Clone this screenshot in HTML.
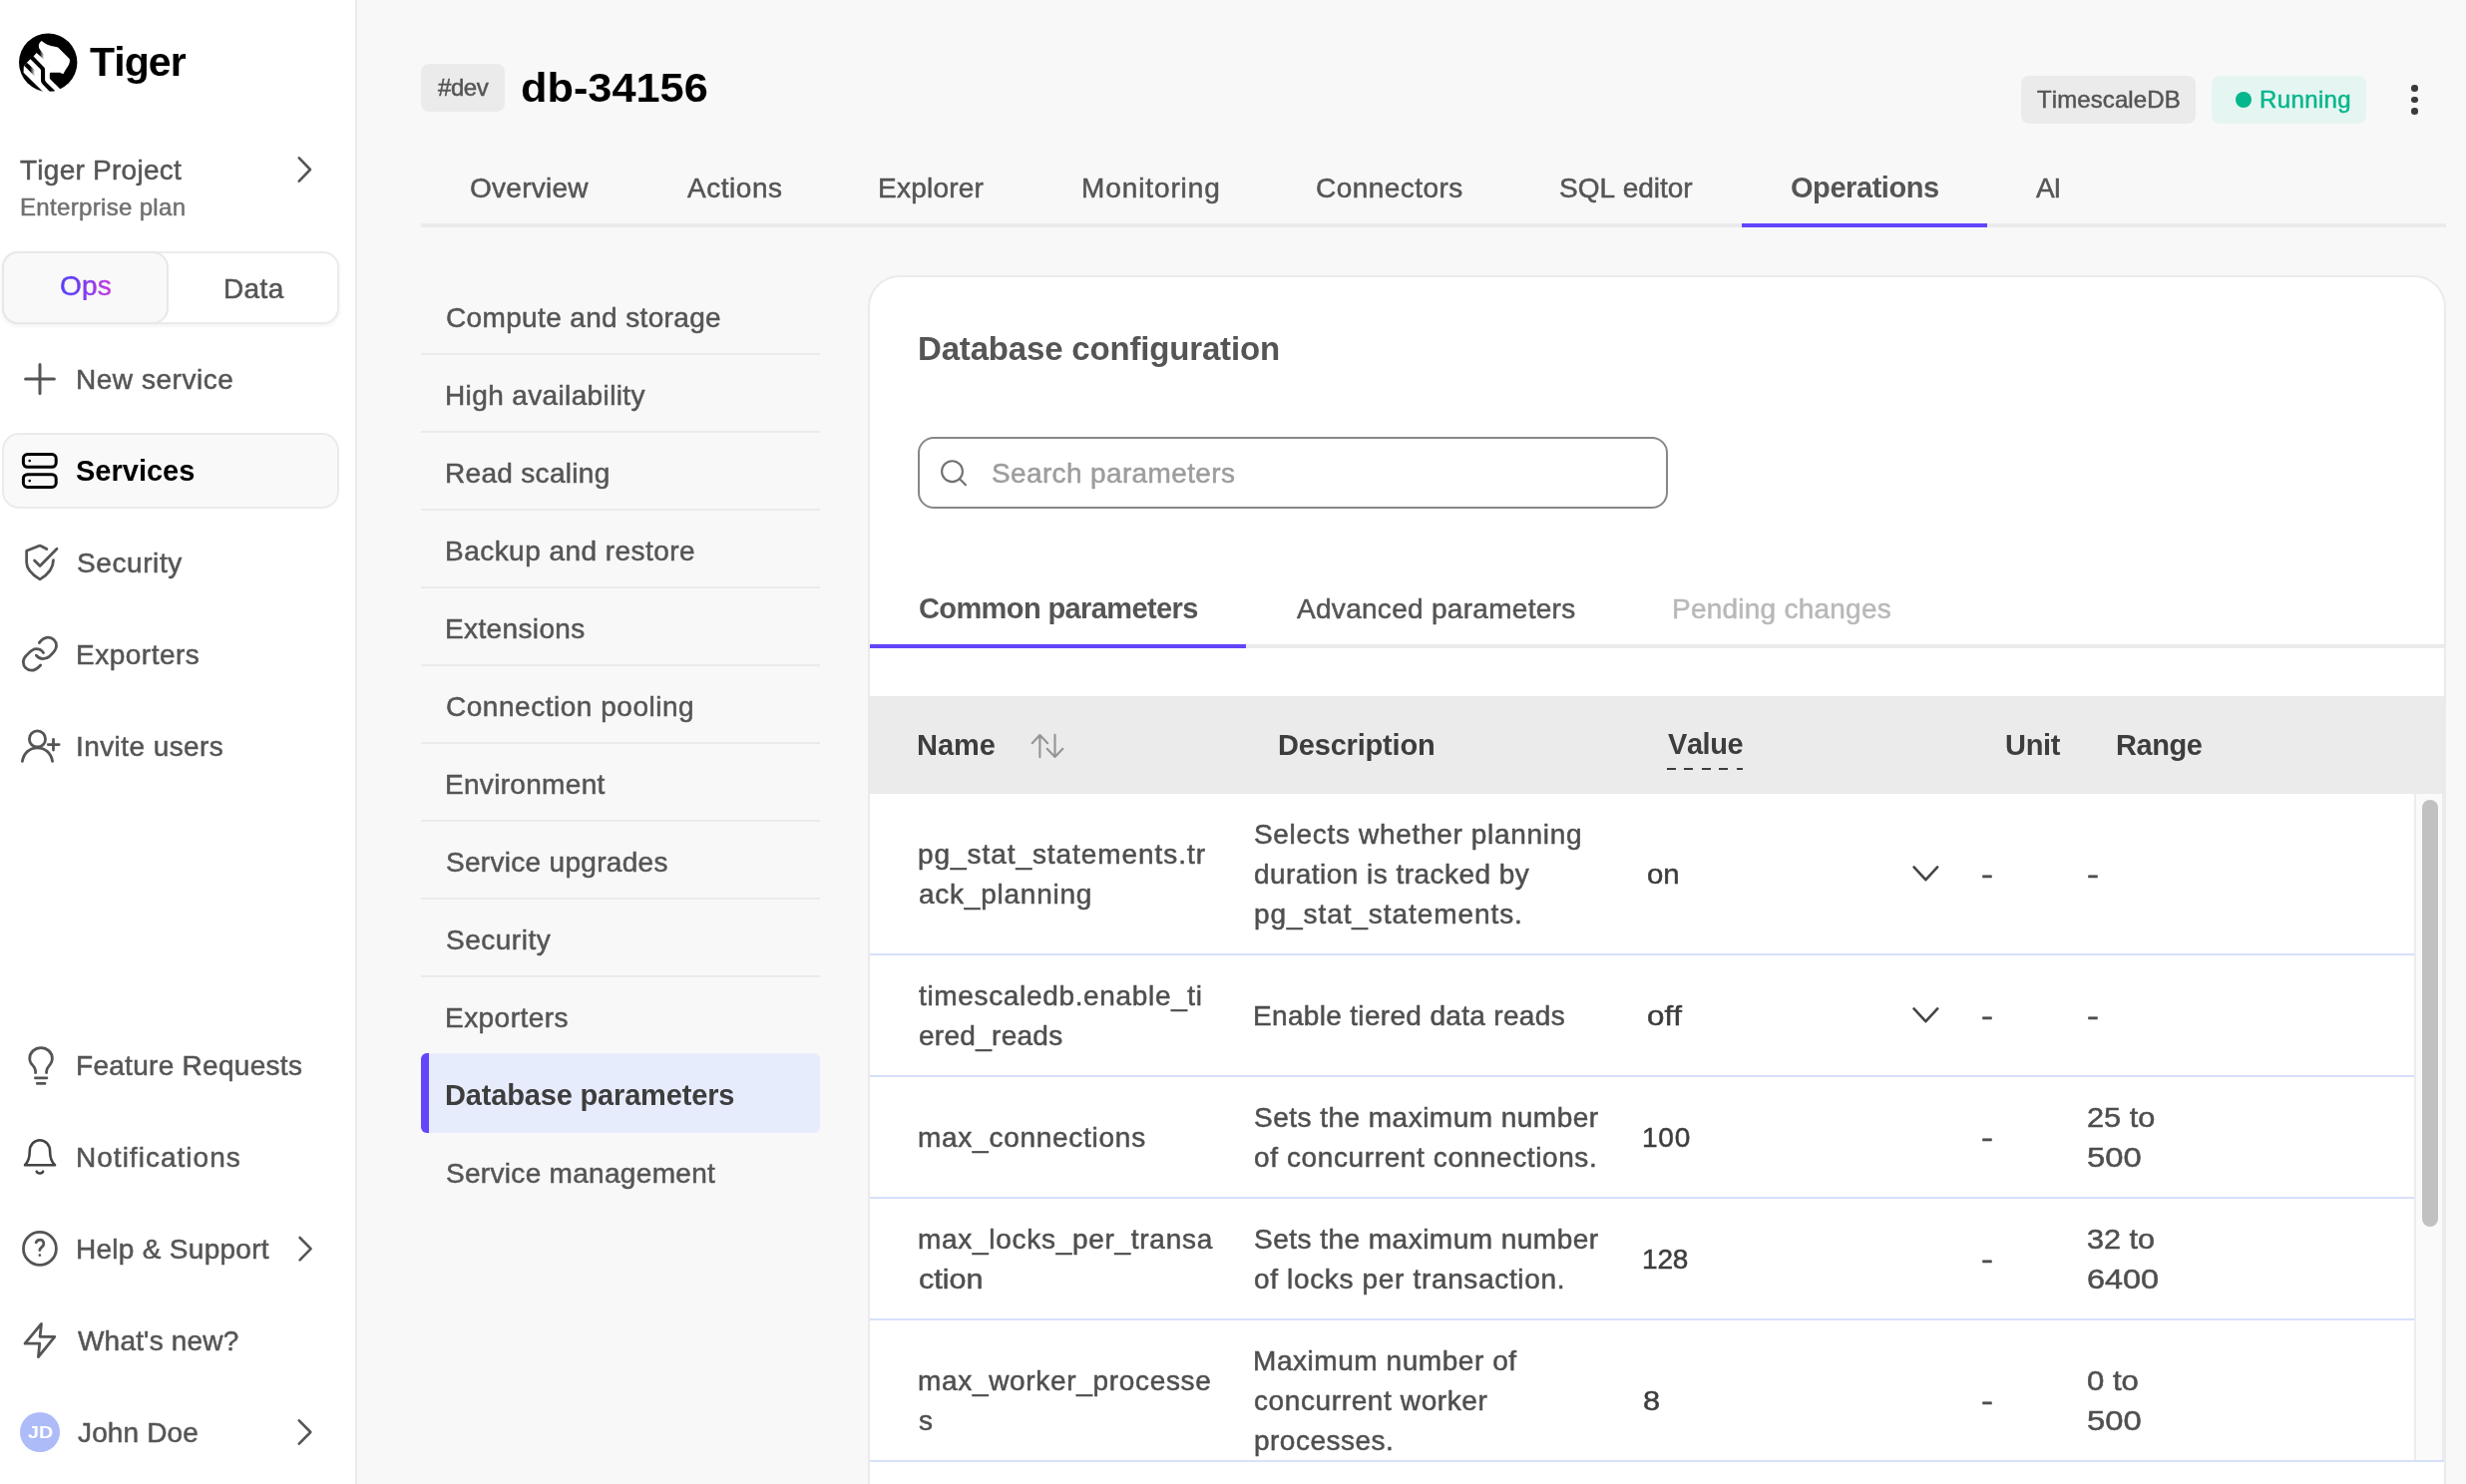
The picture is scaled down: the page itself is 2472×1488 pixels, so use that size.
<!DOCTYPE html>
<html lang="en"><head><meta charset="utf-8"><title>db-34156 – Database parameters</title>
<style>
html,body{margin:0;padding:0;overflow:hidden}
body{width:2472px;height:1488px;overflow:hidden;position:relative;background:#f8f8f8;font-family:"Liberation Sans", sans-serif;color:#555;font-kerning:none;-webkit-font-smoothing:antialiased}
#w{position:absolute;left:0;top:0;width:2472px;height:1488px;will-change:transform}
#w div,#w svg,#w span{position:absolute;display:block}
.t{line-height:1;white-space:pre;font-kerning:none;font-variant-ligatures:none;-webkit-text-stroke:0.5px}
</style></head><body><div id="w">
<aside class="sidebar">
<div style="left:0px;top:0px;width:356px;height:1488px;background:#fff;border-right:2px solid #ebebeb;"></div>
<svg style="left:10px;top:24px;" width="80" height="76" viewBox="0 0 1562 1484" fill="none"><defs><clipPath id="lc"><circle cx="746" cy="755" r="570"/></clipPath>
<linearGradient id="g1" gradientUnits="userSpaceOnUse" x1="585" y1="0" x2="668" y2="0"><stop offset="0" stop-color="#000"/><stop offset="1" stop-color="#000" stop-opacity="0"/></linearGradient>
<linearGradient id="g2" gradientUnits="userSpaceOnUse" x1="395" y1="0" x2="488" y2="0"><stop offset="0" stop-color="#000"/><stop offset="1" stop-color="#000" stop-opacity="0"/></linearGradient></defs>
<circle cx="746" cy="755" r="570" fill="#000"/>
<g>
<path fill="#fff" d="M620,330 C595,350 570,375 565,400 C560,440 565,470 580,495 L600,520 L520,565 L460,635 L650,830 C672,852 685,865 685,900 L685,1080 C685,1110 690,1120 710,1140 L975,1400 L1100,1390 L790,1082 C780,1072 778,1065 778,1050 L778,975 C778,955 783,950 800,950 L985,950 L1000,968 L1045,975 C1080,910 1100,880 1120,850 C1150,800 1165,770 1170,735 C1172,705 1170,690 1160,680 L945,462 C935,455 925,452 900,448 C840,438 800,428 760,415 C720,402 700,395 680,378 C660,362 645,345 620,330 Z"/>
<path fill="url(#g1)" d="M560,500 L600,520 L668,600 L668,700 L520,565 Z"/>
<path fill="#fff" d="M400,690 L580,870 C598,888 605,895 605,925 L605,1090 C605,1130 612,1150 635,1175 L870,1420 L720,1400 L265,950 L270,835 L280,820 L330,755 Z"/>
<path fill="url(#g2)" d="M330,755 L488,905 L488,1028 L280,820 Z"/>
</g></svg>
<span class="t" style="left:90px;top:42px;font-size:41px;letter-spacing:-0.890px;font-weight:700;-webkit-text-stroke:0;color:#000;">Tiger</span>
<span class="t" style="left:20px;top:157px;font-size:28px;letter-spacing:0.255px;">Tiger Project</span>
<span class="t" style="left:20px;top:196px;font-size:24px;letter-spacing:0.327px;color:#707070;">Enterprise plan</span>
<svg style="left:290px;top:150px;" width="30" height="40" viewBox="290 150 30 40" fill="none"><path d="M299.8 158.3 L311 170 L299.8 181.7" stroke="#555" stroke-width="2.6" stroke-linecap="round" stroke-linejoin="round"/></svg>
<div style="left:2px;top:252px;width:338px;height:73px;box-sizing:border-box;background:#fff;border:2px solid #ebebeb;border-radius:16px;box-shadow:0 2px 4px rgba(0,0,0,.06);"></div>
<div style="left:2px;top:252px;width:167px;height:73px;box-sizing:border-box;background:#f9f9f9;border:2px solid #e8e8e8;border-radius:16px;"></div>
<span class="t" style="left:60px;top:273px;font-size:28px;letter-spacing:0.162px;color:#6345fa;background:linear-gradient(90deg,#5a3df5 20%,#c43be0 100%);-webkit-background-clip:text;background-clip:text;color:transparent;">Ops</span>
<span class="t" style="left:224px;top:276px;font-size:28px;letter-spacing:0.384px;">Data</span>
<svg style="left:19.799999999999997px;top:359.8px;" width="40" height="40" viewBox="0 0 40 40" fill="none"><path d="M5.6 20H34.4M20 5.6V34.4" stroke="#555" stroke-width="3" stroke-linecap="round"/></svg>
<span class="t" style="left:76px;top:367px;font-size:28px;letter-spacing:0.536px;">New service</span>
<div style="left:2px;top:434px;width:338px;height:76px;box-sizing:border-box;background:#f9f9f9;border:2px solid #ebebeb;border-radius:17px;"></div>
<svg style="left:20px;top:452px;" width="40" height="40" viewBox="20 452 40 40" fill="none"><rect x="23.4" y="455.5" width="32.8" height="12.8" rx="4.2" stroke="#000" stroke-width="3"/><rect x="23.4" y="475.7" width="32.8" height="12.8" rx="4.2" stroke="#000" stroke-width="3"/><circle cx="29.7" cy="462" r="1.3" fill="#000"/><circle cx="29.7" cy="482.1" r="1.3" fill="#000"/></svg>
<span class="t" style="left:76px;top:458px;font-size:29px;font-weight:700;-webkit-text-stroke:0;color:#000;">Services</span>
<svg style="left:14px;top:536px;" width="56" height="56" viewBox="0 0 1484 1484" fill="none"><path d="M870,385 L720,305 C700,293 680,293 655,303 L335,430 L335,740 C335,950 560,1110 690,1190 C820,1110 1045,950 1045,680 M545,690 L690,835 L1140,375" stroke="#555" stroke-width="74" stroke-linecap="round" stroke-linejoin="round"/></svg>
<span class="t" style="left:77px;top:551px;font-size:28px;letter-spacing:0.590px;">Security</span>
<svg style="left:12px;top:626px;" width="56" height="56" viewBox="0 0 1484 1484" fill="none"><path d="M725,490 C800,400 870,355 950,350 C1080,345 1180,440 1180,570 C1180,680 1100,760 1000,850 C940,900 880,915 820,915 C740,915 680,870 645,825 M835,755 C790,690 720,655 640,655 C540,655 470,740 380,830 C320,890 300,950 300,1010 C300,1130 400,1225 520,1225 C620,1225 700,1150 760,1085" stroke="#555" stroke-width="74" stroke-linecap="round" stroke-linejoin="round"/></svg>
<span class="t" style="left:76px;top:643px;font-size:28px;letter-spacing:0.504px;">Exporters</span>
<svg style="left:12px;top:720px;" width="56" height="56" viewBox="0 0 1484 1484" fill="none"><circle cx="675" cy="555" r="214" stroke="#555" stroke-width="74" stroke-linecap="round" stroke-linejoin="round"/><path d="M275,1150 C310,920 480,790 675,790 C870,790 1040,920 1075,1150 M960,705 L1250,705 M1100,565 L1100,850" stroke="#555" stroke-width="74" stroke-linecap="round" stroke-linejoin="round"/></svg>
<span class="t" style="left:76px;top:735px;font-size:28px;letter-spacing:0.423px;">Invite users</span>
<svg style="left:12px;top:1040px;" width="56" height="56" viewBox="0 0 1484 1484" fill="none"><path d="M625,945 L625,890 C620,800 560,765 510,700 C480,655 470,610 470,570 C470,400 610,280 770,280 C930,280 1070,400 1070,570 C1070,640 1045,690 1010,730 C960,790 920,830 920,900 L915,945 M620,1085 L925,1085 M670,1230 L875,1230" stroke="#555" stroke-width="74" stroke-linecap="round" stroke-linejoin="round"/></svg>
<span class="t" style="left:76px;top:1055px;font-size:28px;letter-spacing:0.292px;">Feature Requests</span>
<svg style="left:12px;top:1132px;" width="56" height="56" viewBox="0 0 1484 1484" fill="none"><path d="M345,960 L1140,960 C1060,880 1010,760 1010,600 C1010,420 890,300 740,300 C590,300 470,420 470,600 C470,760 420,880 345,960 Z M655,1130 C680,1195 800,1195 825,1130" stroke="#444" stroke-width="68" stroke-linecap="round" stroke-linejoin="round"/></svg>
<span class="t" style="left:76px;top:1147px;font-size:28px;letter-spacing:1.020px;">Notifications</span>
<svg style="left:12px;top:1224px;" width="56" height="56" viewBox="0 0 1484 1484" fill="none"><circle cx="740" cy="740" r="436" stroke="#555" stroke-width="74" stroke-linecap="round" stroke-linejoin="round"/><path d="M640,575 C660,525 710,508 755,508 C830,508 850,585 838,640 C822,705 738,715 738,785 M738,915 L738.5,915" stroke="#555" stroke-width="74" stroke-linecap="round" stroke-linejoin="round"/></svg>
<span class="t" style="left:76px;top:1239px;font-size:28px;letter-spacing:0.286px;">Help &amp; Support</span>
<svg style="left:290px;top:1232px;" width="30" height="40" viewBox="290 1232 30 40" fill="none"><path d="M300.6 1241 L311.6 1252.2 L300.6 1263.4" stroke="#555" stroke-width="2.6" stroke-linecap="round" stroke-linejoin="round"/></svg>
<svg style="left:12px;top:1316px;" width="56" height="56" viewBox="0 0 1484 1484" fill="none"><path d="M780,300 L345,825 L735,825 L700,1180 L1135,645 L745,645 Z" stroke="#555" stroke-width="74" stroke-linecap="round" stroke-linejoin="round"/></svg>
<span class="t" style="left:78px;top:1331px;font-size:28px;letter-spacing:0.188px;">What's new?</span>
<div style="left:20px;top:1416px;width:40px;height:40px;border-radius:50%;background:#adbbf8;"></div>
<span class="t" style="left:28px;top:1428px;font-size:16.5px;font-weight:700;-webkit-text-stroke:0;color:#fff;transform:scaleX(1.1945);transform-origin:0 0;">JD</span>
<span class="t" style="left:78px;top:1423px;font-size:28px;letter-spacing:0.148px;">John Doe</span>
<svg style="left:290px;top:1416px;" width="30" height="40" viewBox="290 1416 30 40" fill="none"><path d="M299.8 1424.3 L311.3 1436 L299.8 1447.7" stroke="#555" stroke-width="2.6" stroke-linecap="round" stroke-linejoin="round"/></svg>
</aside>
<header class="service-header">
<div style="left:422px;top:64px;width:84px;height:48px;background:#ebebeb;border-radius:8px;"></div>
<span class="t" style="left:439px;top:76px;font-size:24px;letter-spacing:-0.431px;">#dev</span>
<span class="t" style="left:522px;top:68px;font-size:40px;font-weight:700;-webkit-text-stroke:0;color:#000;transform:scaleX(1.0826);transform-origin:0 0;">db-34156</span>
<div style="left:2026px;top:76px;width:175px;height:48px;background:#ebebeb;border-radius:8px;"></div>
<span class="t" style="left:2042px;top:88px;font-size:24px;letter-spacing:0.096px;">TimescaleDB</span>
<div style="left:2217px;top:76px;width:155.3px;height:48px;background:#e5f6f2;border-radius:8px;"></div>
<div style="left:2240.8px;top:92.1px;width:16px;height:16px;background:#06b68c;border-radius:50%;"></div>
<span class="t" style="left:2265px;top:88px;font-size:24px;letter-spacing:0.383px;color:#06b68c;">Running</span>
<div style="left:2417.2px;top:85.4px;width:6.6px;height:6.6px;background:#3a3a3a;border-radius:50%;"></div>
<div style="left:2417.2px;top:96.8px;width:6.6px;height:6.6px;background:#3a3a3a;border-radius:50%;"></div>
<div style="left:2417.2px;top:108.3px;width:6.6px;height:6.6px;background:#3a3a3a;border-radius:50%;"></div>
<span class="t" style="left:471px;top:175px;font-size:28px;letter-spacing:0.265px;">Overview</span>
<span class="t" style="left:689px;top:175px;font-size:28px;letter-spacing:0.534px;">Actions</span>
<span class="t" style="left:880px;top:175px;font-size:28px;letter-spacing:0.234px;">Explorer</span>
<span class="t" style="left:1084px;top:175px;font-size:28px;letter-spacing:0.894px;">Monitoring</span>
<span class="t" style="left:1319px;top:175px;font-size:28px;letter-spacing:0.454px;">Connectors</span>
<span class="t" style="left:1563px;top:175px;font-size:28px;letter-spacing:-0.028px;">SQL editor</span>
<span class="t" style="left:1795px;top:174px;font-size:29px;letter-spacing:-0.437px;font-weight:700;-webkit-text-stroke:0;">Operations</span>
<span class="t" style="left:2041px;top:175px;font-size:28px;letter-spacing:-1.101px;">AI</span>
<div style="left:422px;top:224px;width:2030px;height:4px;background:#ebebeb;"></div>
<div style="left:1746px;top:224px;width:246px;height:4px;background:#6345fa;"></div>
</header>
<nav class="operations-nav">
<div style="left:422px;top:354px;width:400px;height:2px;background:#ebebeb;"></div>
<div style="left:422px;top:432px;width:400px;height:2px;background:#ebebeb;"></div>
<div style="left:422px;top:510px;width:400px;height:2px;background:#ebebeb;"></div>
<div style="left:422px;top:588px;width:400px;height:2px;background:#ebebeb;"></div>
<div style="left:422px;top:666px;width:400px;height:2px;background:#ebebeb;"></div>
<div style="left:422px;top:744px;width:400px;height:2px;background:#ebebeb;"></div>
<div style="left:422px;top:822px;width:400px;height:2px;background:#ebebeb;"></div>
<div style="left:422px;top:900px;width:400px;height:2px;background:#ebebeb;"></div>
<div style="left:422px;top:978px;width:400px;height:2px;background:#ebebeb;"></div>
<div style="left:422px;top:1056px;width:400px;height:80px;background:#e7ecfd;border-radius:6px;overflow:hidden;"><div style="left:0;top:0;width:8px;height:80px;background:#6345fa"></div></div>
<span class="t" style="left:447px;top:305px;font-size:28px;letter-spacing:0.355px;">Compute and storage</span>
<span class="t" style="left:446px;top:383px;font-size:28px;letter-spacing:0.371px;">High availability</span>
<span class="t" style="left:446px;top:461px;font-size:28px;letter-spacing:0.309px;">Read scaling</span>
<span class="t" style="left:446px;top:539px;font-size:28px;letter-spacing:0.461px;">Backup and restore</span>
<span class="t" style="left:446px;top:617px;font-size:28px;letter-spacing:0.365px;">Extensions</span>
<span class="t" style="left:447px;top:695px;font-size:28px;letter-spacing:0.527px;">Connection pooling</span>
<span class="t" style="left:446px;top:773px;font-size:28px;letter-spacing:0.312px;">Environment</span>
<span class="t" style="left:447px;top:851px;font-size:28px;letter-spacing:0.303px;">Service upgrades</span>
<span class="t" style="left:447px;top:929px;font-size:28px;letter-spacing:0.504px;">Security</span>
<span class="t" style="left:446px;top:1007px;font-size:28px;letter-spacing:0.454px;">Exporters</span>
<span class="t" style="left:446px;top:1084px;font-size:29px;letter-spacing:-0.166px;font-weight:700;-webkit-text-stroke:0;color:#3d3d3d;">Database parameters</span>
<span class="t" style="left:447px;top:1163px;font-size:28px;letter-spacing:0.307px;">Service management</span>
</nav>
<main class="card">
<div style="left:870px;top:276px;width:1582px;height:1300px;box-sizing:border-box;background:#fff;border:2px solid #ebebeb;border-radius:32px;"></div>
<span class="t" style="left:920px;top:333px;font-size:33px;letter-spacing:-0.174px;font-weight:700;-webkit-text-stroke:0;">Database configuration</span>
<div style="left:920px;top:438px;width:752px;height:72px;box-sizing:border-box;border:2px solid #878787;border-radius:16px;background:#fff;"></div>
<svg style="left:940px;top:458px;" width="32" height="32" viewBox="940 458 32 32" fill="none"><circle cx="954.5" cy="472.7" r="10.4" stroke="#707070" stroke-width="2.1"/><path d="M962 480.3 L968 486.2" stroke="#707070" stroke-width="2.1" stroke-linecap="round"/></svg>
<span class="t" style="left:994px;top:461px;font-size:28px;letter-spacing:0.365px;color:#9d9d9d;">Search parameters</span>
<span class="t" style="left:921px;top:596px;font-size:29px;letter-spacing:-0.608px;font-weight:700;-webkit-text-stroke:0;">Common parameters</span>
<span class="t" style="left:1300px;top:597px;font-size:28px;letter-spacing:0.294px;">Advanced parameters</span>
<span class="t" style="left:1676px;top:597px;font-size:28px;letter-spacing:0.239px;color:#b8b8b8;">Pending changes</span>
<div style="left:872px;top:646px;width:1578px;height:4px;background:#ebebeb;"></div>
<div style="left:872px;top:646px;width:377px;height:4px;background:#6345fa;"></div>
<div style="left:872px;top:698px;width:1580px;height:98px;background:#ebebeb;"></div>
<span class="t" style="left:919px;top:733px;font-size:29px;letter-spacing:-0.036px;font-weight:700;-webkit-text-stroke:0;color:#3d3d3d;">Name</span>
<svg style="left:1028px;top:730px;" width="44" height="36" viewBox="1028 730 44 36" fill="none"><path d="M1042.4 759.2 V737 M1034.7 745.2 L1042.4 737 L1050.2 745.2 M1057.5 736.8 V759 M1049.6 750.8 L1057.5 759 L1065.4 750.8" stroke="#949494" stroke-width="2.1" stroke-linecap="round" stroke-linejoin="round"/></svg>
<span class="t" style="left:1281px;top:733px;font-size:29px;letter-spacing:-0.182px;font-weight:700;-webkit-text-stroke:0;color:#3d3d3d;">Description</span>
<span class="t" style="left:1672px;top:732px;font-size:29px;letter-spacing:-0.455px;font-weight:700;-webkit-text-stroke:0;color:#3d3d3d;">Value</span>
<div style="left:1671px;top:769.8px;width:76px;height:2px;background:repeating-linear-gradient(90deg,#3d3d3d 0 8.5px,transparent 8.5px 17.5px);"></div>
<span class="t" style="left:2010px;top:733px;font-size:29px;letter-spacing:-0.280px;font-weight:700;-webkit-text-stroke:0;color:#3d3d3d;">Unit</span>
<span class="t" style="left:2121px;top:733px;font-size:29px;letter-spacing:-0.463px;font-weight:700;-webkit-text-stroke:0;color:#3d3d3d;">Range</span>
<div style="left:872px;top:956px;width:1549px;height:2px;background:#d7e0fb;"></div>
<div style="left:872px;top:1078px;width:1549px;height:2px;background:#d7e0fb;"></div>
<div style="left:872px;top:1200px;width:1549px;height:2px;background:#d7e0fb;"></div>
<div style="left:872px;top:1322px;width:1549px;height:2px;background:#d7e0fb;"></div>
<div style="left:872px;top:1464px;width:1578px;height:2px;background:#d7e0fb;"></div>
<div style="left:2420px;top:796px;width:30px;height:668px;box-sizing:border-box;background:#fafafa;border-left:2px solid #ececec;border-right:2px solid #ececec;"></div>
<div style="left:2428.3px;top:802px;width:15.7px;height:428px;background:#c1c1c1;border-radius:8px;"></div>
<span class="t" style="left:920px;top:843px;font-size:28px;letter-spacing:0.937px;color:#4f4f4f;">pg_stat_statements.tr</span>
<span class="t" style="left:921px;top:883px;font-size:28px;letter-spacing:0.757px;color:#4f4f4f;">ack_planning</span>
<span class="t" style="left:1257px;top:823px;font-size:28px;letter-spacing:0.678px;color:#4f4f4f;">Selects whether planning</span>
<span class="t" style="left:1257px;top:863px;font-size:28px;letter-spacing:0.458px;color:#4f4f4f;">duration is tracked by</span>
<span class="t" style="left:1257px;top:903px;font-size:28px;letter-spacing:0.929px;color:#4f4f4f;">pg_stat_statements.</span>
<span class="t" style="left:1651px;top:863px;font-size:28px;color:#3d3d3d;transform:scaleX(1.0497);transform-origin:0 0;">on</span>
<span class="t" style="left:1986px;top:863px;font-size:28px;color:#4f4f4f;transform:scaleX(1.2800);transform-origin:0 0;">-</span>
<span class="t" style="left:2092px;top:863px;font-size:28px;color:#4f4f4f;transform:scaleX(1.2800);transform-origin:0 0;">-</span>
<span class="t" style="left:921px;top:985px;font-size:28px;letter-spacing:0.659px;color:#4f4f4f;">timescaledb.enable_ti</span>
<span class="t" style="left:921px;top:1025px;font-size:28px;letter-spacing:0.286px;color:#4f4f4f;">ered_reads</span>
<span class="t" style="left:1256px;top:1005px;font-size:28px;letter-spacing:0.328px;color:#4f4f4f;">Enable tiered data reads</span>
<span class="t" style="left:1651px;top:1005px;font-size:28px;color:#3d3d3d;transform:scaleX(1.1195);transform-origin:0 0;">off</span>
<span class="t" style="left:1986px;top:1005px;font-size:28px;color:#4f4f4f;transform:scaleX(1.2800);transform-origin:0 0;">-</span>
<span class="t" style="left:2092px;top:1005px;font-size:28px;color:#4f4f4f;transform:scaleX(1.2800);transform-origin:0 0;">-</span>
<svg style="left:1910px;top:862.2px;" width="40" height="28" viewBox="1910 862.2 40 28" fill="none"><path d="M1918.6 869.6 L1930.4 882.4000000000001 L1942.2 869.6" stroke="#444" stroke-width="2.6" stroke-linecap="round" stroke-linejoin="round"/></svg>
<svg style="left:1910px;top:1004.2px;" width="40" height="28" viewBox="1910 1004.2 40 28" fill="none"><path d="M1918.6 1011.6 L1930.4 1024.4 L1942.2 1011.6" stroke="#444" stroke-width="2.6" stroke-linecap="round" stroke-linejoin="round"/></svg>
<span class="t" style="left:920px;top:1127px;font-size:28px;letter-spacing:0.734px;color:#4f4f4f;">max_connections</span>
<span class="t" style="left:1257px;top:1107px;font-size:28px;letter-spacing:0.479px;color:#4f4f4f;">Sets the maximum number</span>
<span class="t" style="left:1257px;top:1147px;font-size:28px;letter-spacing:0.614px;color:#4f4f4f;">of concurrent connections.</span>
<span class="t" style="left:1646px;top:1127px;font-size:28px;letter-spacing:0.790px;color:#3d3d3d;">100</span>
<span class="t" style="left:1986px;top:1127px;font-size:28px;color:#4f4f4f;transform:scaleX(1.2800);transform-origin:0 0;">-</span>
<span class="t" style="left:2092px;top:1107px;font-size:28px;color:#4f4f4f;transform:scaleX(1.0971);transform-origin:0 0;">25 to</span>
<span class="t" style="left:2092px;top:1147px;font-size:28px;color:#4f4f4f;transform:scaleX(1.1703);transform-origin:0 0;">500</span>
<span class="t" style="left:920px;top:1229px;font-size:28px;letter-spacing:0.712px;color:#4f4f4f;">max_locks_per_transa</span>
<span class="t" style="left:921px;top:1269px;font-size:28px;color:#4f4f4f;transform:scaleX(1.0908);transform-origin:0 0;">ction</span>
<span class="t" style="left:1257px;top:1229px;font-size:28px;letter-spacing:0.479px;color:#4f4f4f;">Sets the maximum number</span>
<span class="t" style="left:1257px;top:1269px;font-size:28px;letter-spacing:0.657px;color:#4f4f4f;">of locks per transaction.</span>
<span class="t" style="left:1646px;top:1249px;font-size:28px;letter-spacing:-0.197px;color:#3d3d3d;">128</span>
<span class="t" style="left:1986px;top:1249px;font-size:28px;color:#4f4f4f;transform:scaleX(1.2800);transform-origin:0 0;">-</span>
<span class="t" style="left:2092px;top:1229px;font-size:28px;color:#4f4f4f;transform:scaleX(1.0925);transform-origin:0 0;">32 to</span>
<span class="t" style="left:2092px;top:1269px;font-size:28px;color:#4f4f4f;transform:scaleX(1.1581);transform-origin:0 0;">6400</span>
<span class="t" style="left:920px;top:1371px;font-size:28px;letter-spacing:0.678px;color:#4f4f4f;">max_worker_processe</span>
<span class="t" style="left:921px;top:1411px;font-size:28px;color:#4f4f4f;">s</span>
<span class="t" style="left:1256px;top:1351px;font-size:28px;letter-spacing:0.554px;color:#4f4f4f;">Maximum number of</span>
<span class="t" style="left:1257px;top:1391px;font-size:28px;letter-spacing:0.612px;color:#4f4f4f;">concurrent worker</span>
<span class="t" style="left:1257px;top:1431px;font-size:28px;letter-spacing:0.487px;color:#4f4f4f;">processes.</span>
<span class="t" style="left:1647px;top:1391px;font-size:28px;color:#3d3d3d;transform:scaleX(1.0971);transform-origin:0 0;">8</span>
<span class="t" style="left:1986px;top:1391px;font-size:28px;color:#4f4f4f;transform:scaleX(1.2800);transform-origin:0 0;">-</span>
<span class="t" style="left:2092px;top:1371px;font-size:28px;color:#4f4f4f;transform:scaleX(1.1108);transform-origin:0 0;">0 to</span>
<span class="t" style="left:2092px;top:1411px;font-size:28px;color:#4f4f4f;transform:scaleX(1.1703);transform-origin:0 0;">500</span>
</main>
</div>
<script>(function(){var w=document.getElementById("w"),s=window.innerWidth/2472;if(s>0&&Math.abs(s-1)>0.002){w.style.zoom=s;document.body.style.width=(2472*s)+"px";document.body.style.height=(1488*s)+"px";}})();</script>
</body></html>
